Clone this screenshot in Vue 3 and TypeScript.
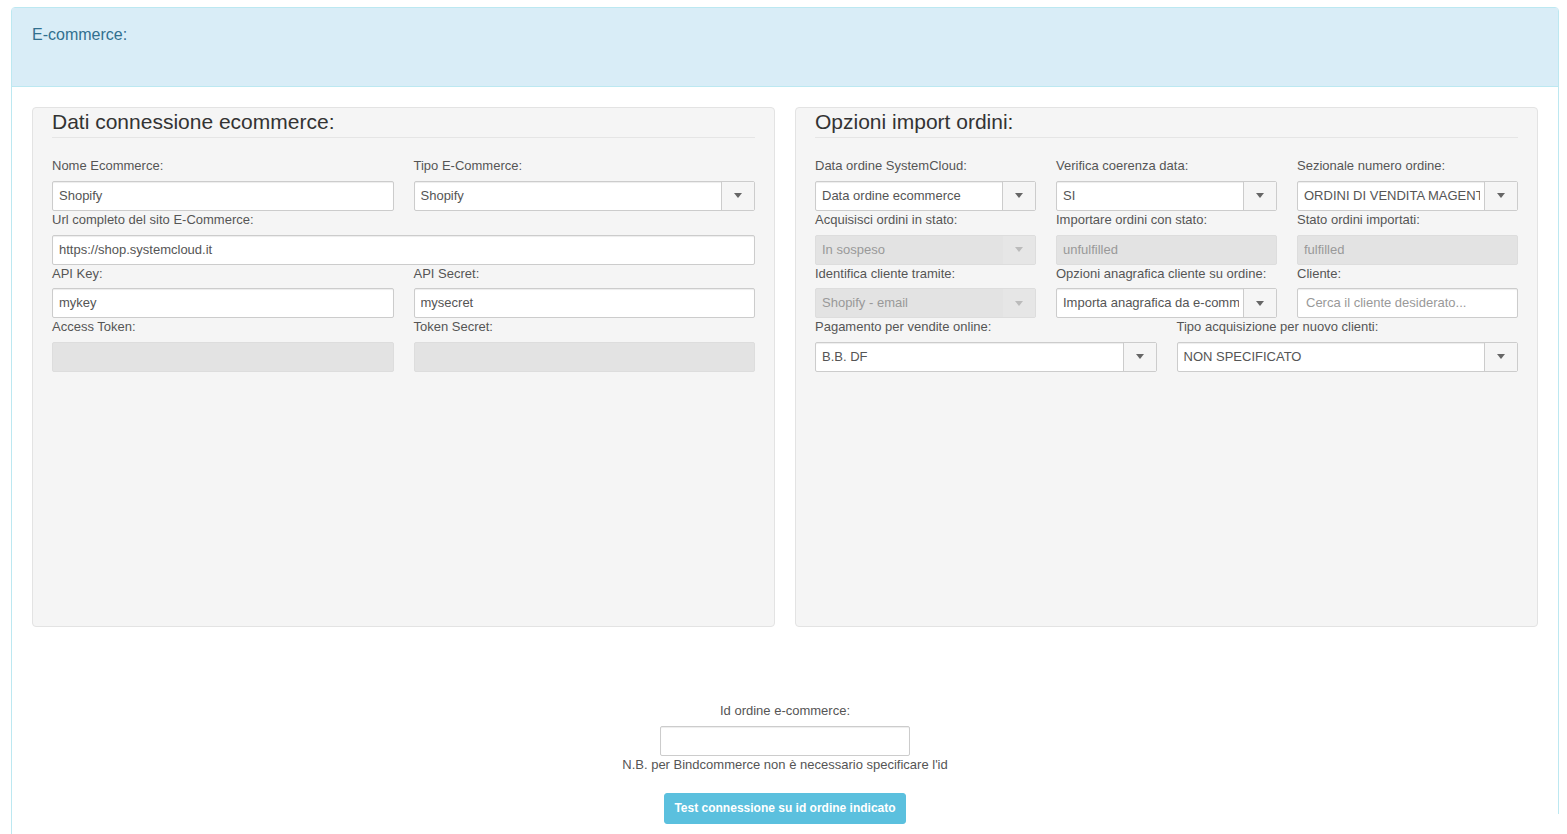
<script setup lang="ts">
interface Field {
  label: string
  value?: string
  placeholder?: string
  kind: 'input' | 'select'
  disabled?: boolean
  span: number
}

const leftFields: Field[] = [
  { label: 'Nome Ecommerce:', value: 'Shopify', kind: 'input', span: 3 },
  { label: 'Tipo E-Commerce:', value: 'Shopify', kind: 'select', span: 3 },
  { label: 'Url completo del sito E-Commerce:', value: 'https://shop.systemcloud.it', kind: 'input', span: 6 },
  { label: 'API Key:', value: 'mykey', kind: 'input', span: 3 },
  { label: 'API Secret:', value: 'mysecret', kind: 'input', span: 3 },
  { label: 'Access Token:', value: '', kind: 'input', disabled: true, span: 3 },
  { label: 'Token Secret:', value: '', kind: 'input', disabled: true, span: 3 }
]

const rightFields: Field[] = [
  { label: 'Data ordine SystemCloud:', value: 'Data ordine ecommerce', kind: 'select', span: 2 },
  { label: 'Verifica coerenza data:', value: 'SI', kind: 'select', span: 2 },
  { label: 'Sezionale numero ordine:', value: 'ORDINI DI VENDITA MAGENTO', kind: 'select', span: 2 },
  { label: 'Acquisisci ordini in stato:', value: 'In sospeso', kind: 'select', disabled: true, span: 2 },
  { label: 'Importare ordini con stato:', value: 'unfulfilled', kind: 'input', disabled: true, span: 2 },
  { label: 'Stato ordini importati:', value: 'fulfilled', kind: 'input', disabled: true, span: 2 },
  { label: 'Identifica cliente tramite:', value: 'Shopify - email', kind: 'select', disabled: true, span: 2 },
  { label: 'Opzioni anagrafica cliente su ordine:', value: 'Importa anagrafica da e-commerce', kind: 'select', span: 2 },
  { label: 'Cliente:', placeholder: 'Cerca il cliente desiderato...', kind: 'input', span: 2 },
  { label: 'Pagamento per vendite online:', value: 'B.B. DF', kind: 'select', span: 3 },
  { label: 'Tipo acquisizione per nuovo clienti:', value: 'NON SPECIFICATO', kind: 'select', span: 3 }
]

const sections = [
  { title: 'Dati connessione ecommerce:', fields: leftFields },
  { title: 'Opzioni import ordini:', fields: rightFields }
]
</script>

<template>
  <div class="page">
    <section class="panel">
      <header class="panel-heading">E-commerce:</header>
      <div class="panel-body">
        <div class="wells">
          <div v-for="section in sections" :key="section.title" class="well">
            <h2 class="legend">{{ section.title }}</h2>
            <div class="fields">
              <div
                v-for="field in section.fields"
                :key="field.label"
                class="field"
                :style="{ gridColumn: `span ${field.span}` }"
              >
                <label class="label">{{ field.label }}</label>
                <div v-if="field.kind === 'select'" class="select" :class="{ disabled: field.disabled }">
                  <span class="select-value">{{ field.value }}</span>
                  <span class="select-btn"><i class="caret"></i></span>
                </div>
                <input
                  v-else
                  class="input"
                  type="text"
                  :value="field.value"
                  :placeholder="field.placeholder"
                  :disabled="field.disabled"
                />
              </div>
            </div>
          </div>
        </div>
        <div class="test">
          <label class="test-label">Id ordine e-commerce:</label>
          <input class="input test-input" type="text" />
          <p class="note">N.B. per Bindcommerce non è necessario specificare l'id</p>
          <button class="btn" type="button">Test connessione su id ordine indicato</button>
        </div>
      </div>
    </section>
    <div class="edge-mask"></div>
  </div>
</template>

<style>
html, body {
  margin: 0;
  background: #fff;
  overflow: hidden;
}
</style>

<style scoped>
.page {
  position: relative;
  box-sizing: border-box;
  height: 834px;
  padding: 7px 8px 0 11px;
  font-family: "Liberation Sans", Arial, sans-serif;
  font-size: 13px;
  color: #555;
  overflow: hidden;
}
.edge-mask {
  position: absolute;
  top: 814px;
  right: 0;
  width: 12px;
  height: 20px;
  background: #fff;
}
.panel {
  border: 1px solid #bce8f1;
  border-radius: 4px;
  min-height: 900px;
}
.panel-heading {
  box-sizing: border-box;
  height: 79px;
  padding: 17px 20px 0;
  background: #d9edf7;
  border-bottom: 1px solid #bce8f1;
  color: #31708f;
  font-size: 16px;
  line-height: 20px;
}
.panel-body {
  padding: 20px 20px 0;
}
.wells {
  display: grid;
  grid-template-columns: 1fr 1fr;
  gap: 20px;
}
.well {
  box-sizing: border-box;
  height: 520px;
  padding: 0 19px;
  background: #f5f5f5;
  border: 1px solid #e3e3e3;
  border-radius: 4px;
}
.legend {
  box-sizing: border-box;
  height: 30px;
  margin: 0 0 19.33px;
  border-bottom: 1px solid #e5e5e5;
  color: #333;
  font-size: 21px;
  font-weight: 400;
  line-height: 28px;
}
.fields {
  display: grid;
  grid-template-columns: repeat(6, 1fr);
  column-gap: 20px;
}
.field {
  min-width: 0;
}
.label {
  display: block;
  height: 23.67px;
  line-height: 18.6px;
  color: #555;
  white-space: nowrap;
}
.input,
.select {
  box-sizing: border-box;
  display: flex;
  width: 100%;
  height: 30px;
  background: #fff;
  border: 1px solid #ccc;
  border-radius: 2px;
  color: #555;
  font-family: inherit;
  font-size: 13px;
  box-shadow: inset 0 1px 1px rgba(0, 0, 0, 0.075);
}
.input {
  padding: 0 6px 1px;
  outline: none;
}
.input::placeholder {
  color: #999;
  opacity: 1;
}
.input:disabled {
  background: #e3e3e3;
  border-color: #ddd;
  color: #999;
  box-shadow: none;
}
.input[placeholder] {
  padding-left: 8px;
}
.select {
  align-items: stretch;
}
.select-value {
  flex: 1;
  min-width: 0;
  margin-right: 4px;
  padding-left: 6px;
  line-height: 27px;
  white-space: nowrap;
  overflow: hidden;
}
.select-btn {
  flex: none;
  display: flex;
  align-items: center;
  justify-content: center;
  width: 32px;
  background: #f5f5f5;
  border-left: 1px solid #ccc;
}
.caret {
  width: 0;
  height: 0;
  border-left: 4.5px solid transparent;
  border-right: 4.5px solid transparent;
  border-top: 5px solid #666;
}
.select.disabled {
  background: #e3e3e3;
  border-color: #ddd;
  color: #999;
  box-shadow: none;
}
.select.disabled .select-btn {
  background: #e6e6e6;
  border-left-color: #e3e3e3;
}
.select.disabled .caret {
  border-top-color: #bbb;
}
.test {
  display: flex;
  flex-direction: column;
  align-items: center;
  margin-top: 73px;
}
.test-label {
  height: 26px;
  line-height: 21px;
}
.test-input {
  width: 250px;
}
.note {
  margin: 0;
  height: 37px;
  line-height: 17px;
}
.btn {
  box-sizing: border-box;
  width: 242px;
  height: 31px;
  padding: 0 0 2px;
  background: #5bc0de;
  border: 1px solid #5bc0de;
  border-radius: 3px;
  color: #fff;
  font-family: inherit;
  font-size: 12px;
  font-weight: 700;
}
</style>
